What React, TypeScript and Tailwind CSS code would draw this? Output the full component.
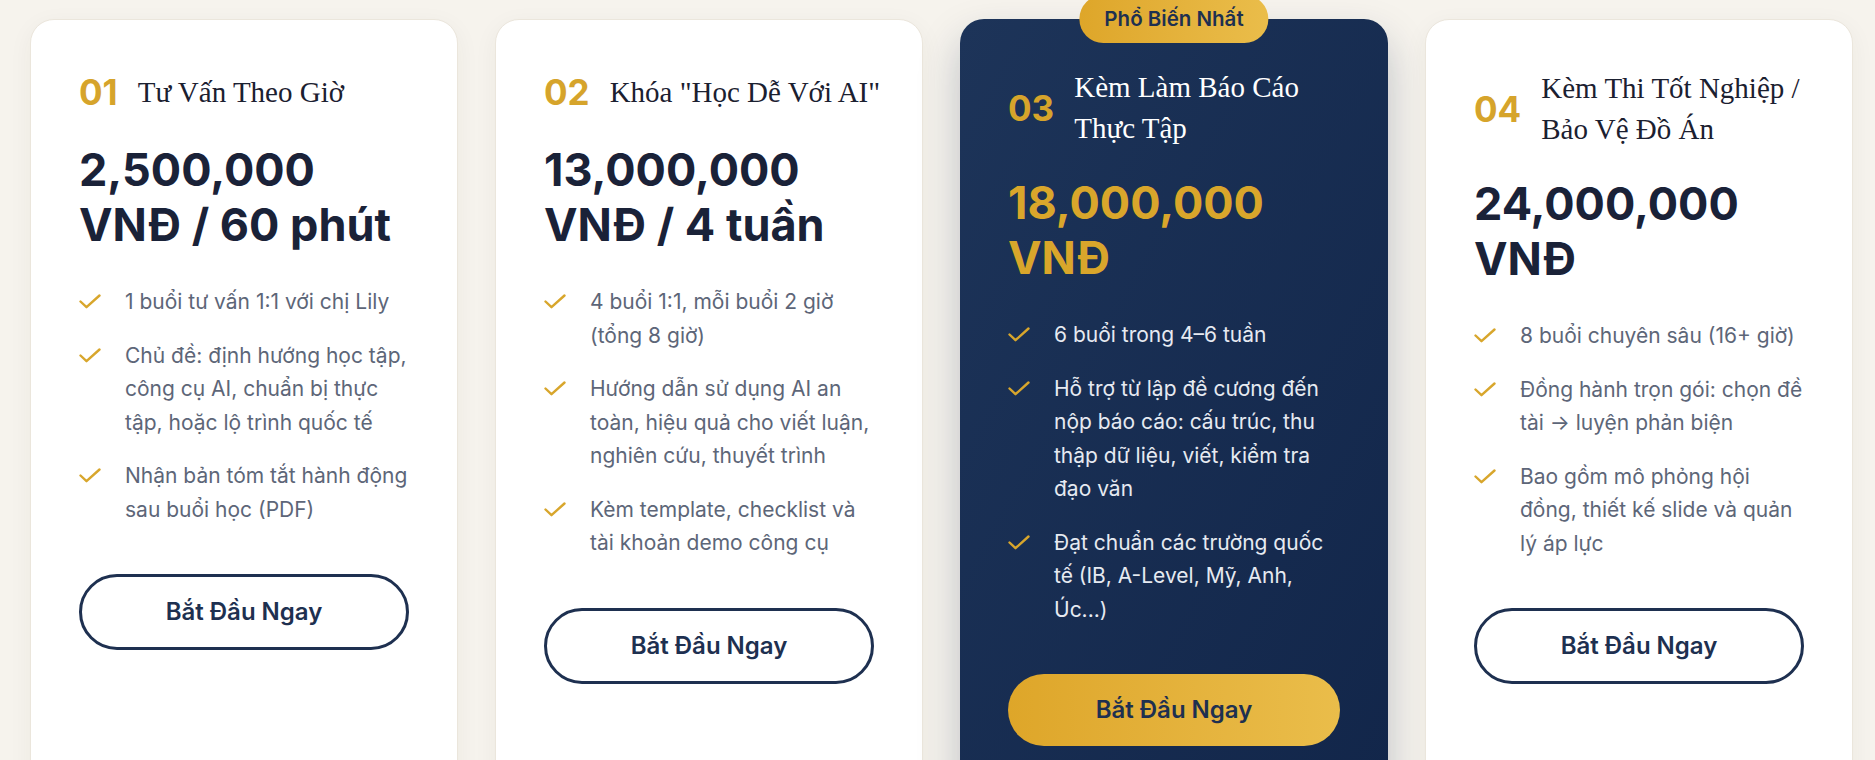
type Plan = {
  num: string;
  title: string[];
  price: string[];
  features: string[];
  featured?: boolean;
};

const PLANS: Plan[] = [
  {
    num: '01',
    title: ['Tư Vấn Theo Giờ'],
    price: ['2,500,000', 'VNĐ / 60 phút'],
    features: [
      '1 buổi tư vấn 1:1 với chị Lily',
      'Chủ đề: định hướng học tập, công cụ AI, chuẩn bị thực tập, hoặc lộ trình quốc tế',
      'Nhận bản tóm tắt hành động sau buổi học (PDF)',
    ],
  },
  {
    num: '02',
    title: ['Khóa "Học Dễ Với AI"'],
    price: ['13,000,000', 'VNĐ / 4 tuần'],
    features: [
      '4 buổi 1:1, mỗi buổi 2 giờ (tổng 8 giờ)',
      'Hướng dẫn sử dụng AI an toàn, hiệu quả cho viết luận, nghiên cứu, thuyết trình',
      'Kèm template, checklist và tài khoản demo công cụ',
    ],
  },
  {
    num: '03',
    title: ['Kèm Làm Báo Cáo', 'Thực Tập'],
    price: ['18,000,000', 'VNĐ'],
    features: [
      '6 buổi trong 4–6 tuần',
      'Hỗ trợ từ lập đề cương đến nộp báo cáo: cấu trúc, thu thập dữ liệu, viết, kiểm tra đạo văn',
      'Đạt chuẩn các trường quốc tế (IB, A-Level, Mỹ, Anh, Úc...)',
    ],
    featured: true,
  },
  {
    num: '04',
    title: ['Kèm Thi Tốt Nghiệp /', 'Bảo Vệ Đồ Án'],
    price: ['24,000,000', 'VNĐ'],
    features: [
      '8 buổi chuyên sâu (16+ giờ)',
      'Đồng hành trọn gói: chọn đề tài → luyện phản biện',
      'Bao gồm mô phỏng hội đồng, thiết kế slide và quản lý áp lực',
    ],
  },
];

function CheckMark() {
  return (
    <svg width="22" height="15" viewBox="0 0 22 15" fill="none" className="shrink-0 mt-[9px]">
      <path d="M1.5 7.5 7.5 13.2 20.5 1.5" stroke="#d8a62c" strokeWidth="2.4" strokeLinecap="round" strokeLinejoin="round" />
    </svg>
  );
}

function PlanCard({ plan }: { plan: Plan }) {
  const dark = !!plan.featured;
  return (
    <div
      className={
        dark
          ? 'relative rounded-3xl p-12 bg-linear-to-br from-[#1d3459] to-[#12264a] shadow-[0_20px_40px_rgba(20,38,74,0.25)]'
          : 'relative rounded-3xl p-12 bg-white border border-[#ebe6dc] shadow-[0_6px_24px_rgba(60,50,30,0.05)]'
      }
    >
      {dark && (
        <div className="absolute left-1/2 top-0 -translate-x-1/2 -translate-y-1/2 h-[48px] px-[25px] flex items-center rounded-full bg-linear-to-r from-[#dea629] to-[#eabd4a] text-[20.5px] font-semibold text-[#1e3050] whitespace-nowrap">
          Phổ Biến Nhất
        </div>
      )}
      <div className="flex items-center gap-5 mb-[26px]">
        <span className="text-[35px] font-bold leading-[48px] text-[#d6a42b]">{plan.num}</span>
        <h3
          className={`font-['Liberation_Serif',serif] text-[29px] leading-[41px] font-normal ${dark ? 'text-white' : 'text-[#1b2030]'}`}
        >
          {plan.title.map((line) => (
            <span key={line} className="block whitespace-nowrap">
              {line}
            </span>
          ))}
        </h3>
      </div>
      <div className={`mb-[33px] text-[45px] font-bold leading-[55px] ${dark ? 'text-[#d9a62b]' : 'text-[#1a2238]'}`}>
        {plan.price.map((line) => (
          <div key={line}>{line}</div>
        ))}
      </div>
      <ul className="flex flex-col gap-5">
        {plan.features.map((f) => (
          <li key={f} className="flex gap-[24px]">
            <CheckMark />
            <span className={`text-[21px] leading-[33.5px] ${dark ? 'text-[#e6eaf1]' : 'text-[#5d6678]'}`}>{f}</span>
          </li>
        ))}
      </ul>
      {dark ? (
        <button className="mt-12 w-full h-[72px] rounded-full bg-linear-to-r from-[#dea629] to-[#eabd4a] text-[24px] font-semibold text-[#1e3050]">
          Bắt Đầu Ngay
        </button>
      ) : (
        <button className="mt-12 w-full h-[76px] rounded-full border-[3px] border-[#1e3050] bg-white text-[24px] font-semibold text-[#1e3050]">
          Bắt Đầu Ngay
        </button>
      )}
    </div>
  );
}

export default function App() {
  return (
    <div className="h-[760px] overflow-hidden bg-[#f6f3ed] font-['Inter','Noto_Sans',sans-serif]">
      <div className="grid grid-cols-[repeat(4,428px)] gap-[37px] pl-[30px] pt-[19px]">
        {PLANS.map((p) => (
          <PlanCard key={p.num} plan={p} />
        ))}
      </div>
    </div>
  );
}
